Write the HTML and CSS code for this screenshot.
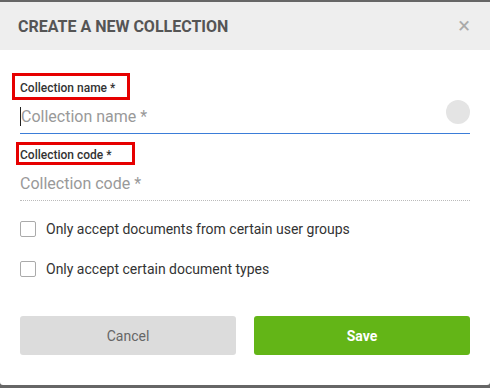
FILE: index.html
```html
<!DOCTYPE html>
<html lang="en">
<head>
    <meta charset="UTF-8">
    <title>Create a new collection</title>
    <link rel="stylesheet" href="styles.css">
</head>
<body>
<div class="dialog">
    <div class="dialogHeader">
        <span class="dialogTitle">CREATE A NEW COLLECTION</span>
        <span class="dialogClose">&times;</span>
    </div>
    <form class="dialogBody">
        <div class="field">
            <label class="fieldLabel marked markName">Collection name *</label>
            <div class="fieldRow active">
                <input class="fieldInput" type="text" placeholder="Collection name *">
                <span class="fieldDot"></span>
            </div>
        </div>
        <div class="field">
            <label class="fieldLabel marked markCode">Collection code *</label>
            <div class="fieldRow dotted">
                <input class="fieldInput" type="text" placeholder="Collection code *">
            </div>
        </div>
        <label class="check"><span class="checkBox"></span>Only accept documents from certain user groups</label>
        <label class="check"><span class="checkBox"></span>Only accept certain document types</label>
        <div class="buttons">
            <button type="button" class="btn cancel">Cancel</button>
            <button type="button" class="btn save">Save</button>
        </div>
    </form>
</div>
</body>
</html>
```

FILE: styles.css
```css
body{
    margin: 0;
    background-color: #666;
    font-family: Roboto, "Liberation Sans", sans-serif;
}
.dialog{
    margin-top: 2px;
    height: 383px;
    background-color: white;
    border-radius: 0 0 3px 3px;
    overflow: hidden;
}
.dialogHeader{
    display: flex;
    justify-content: space-between;
    align-items: center;
    height: 48px;
    padding: 0 18px;
    background-color: #eeeeee;
}
.dialogTitle{
    font-size: 16px;
    font-weight: bold;
    color: #555;
    padding-top: 1px;
}
.dialogClose{
    color: #aaa;
    font-size: 22px;
    line-height: 1;
    margin-right: 2px;
}
.dialogBody{
    padding: 0 20px;
}
.field{
    display: flex;
    flex-direction: column;
}
.fieldLabel{
    position: relative;
    font-size: 12px;
    font-weight: 500;
    color: #333;
    line-height: 14px;
}
.marked::after{
    content: "";
    position: absolute;
    box-sizing: border-box;
    border: 3px solid #e60000;
}
.markName{
    margin-top: 31px;
}
.markName::after{
    left: -8px;
    top: -8px;
    width: 118px;
    height: 27px;
}
.markCode{
    margin-top: 14px;
}
.markCode::after{
    left: -4px;
    top: -6px;
    width: 119px;
    height: 23px;
}
.fieldRow{
    display: flex;
    align-items: flex-end;
    height: 39px;
    padding-bottom: 7px;
    box-sizing: border-box;
}
.active{
    border-bottom: 1px solid #3b7dd8;
}
.dotted{
    border-bottom: 1px dotted #bbb;
}
.fieldInput{
    flex: 1;
    height: 19px;
    line-height: 19px;
    border: 0;
    outline: none;
    padding: 0;
    font-family: inherit;
    font-size: 16px;
    color: #333;
    border-left: 1px solid #222;
}
.dotted .fieldInput{
    border-left: 0;
}
.fieldInput::placeholder{
    color: #999;
}
.fieldDot{
    width: 24px;
    height: 24px;
    border-radius: 50%;
    background-color: #e4e4e4;
    margin-bottom: 2px;
}
.check{
    display: flex;
    align-items: center;
    font-size: 14px;
    color: #333;
    height: 16px;
}
.check:first-of-type{
    margin-top: 20px;
}
.check + .check{
    margin-top: 24px;
}
.checkBox{
    width: 14px;
    height: 14px;
    border: 1px solid #aaa;
    border-radius: 2px;
    margin-right: 10px;
}
.buttons{
    display: flex;
    gap: 18px;
    margin-top: 39px;
}
.btn{
    flex: 1;
    height: 39px;
    border: 0;
    border-radius: 3px;
    font-family: inherit;
    font-size: 14px;
}
.cancel{
    background-color: #dcdcdc;
    color: #666;
}
.save{
    background-color: #63b517;
    color: white;
    font-weight: bold;
}
```
